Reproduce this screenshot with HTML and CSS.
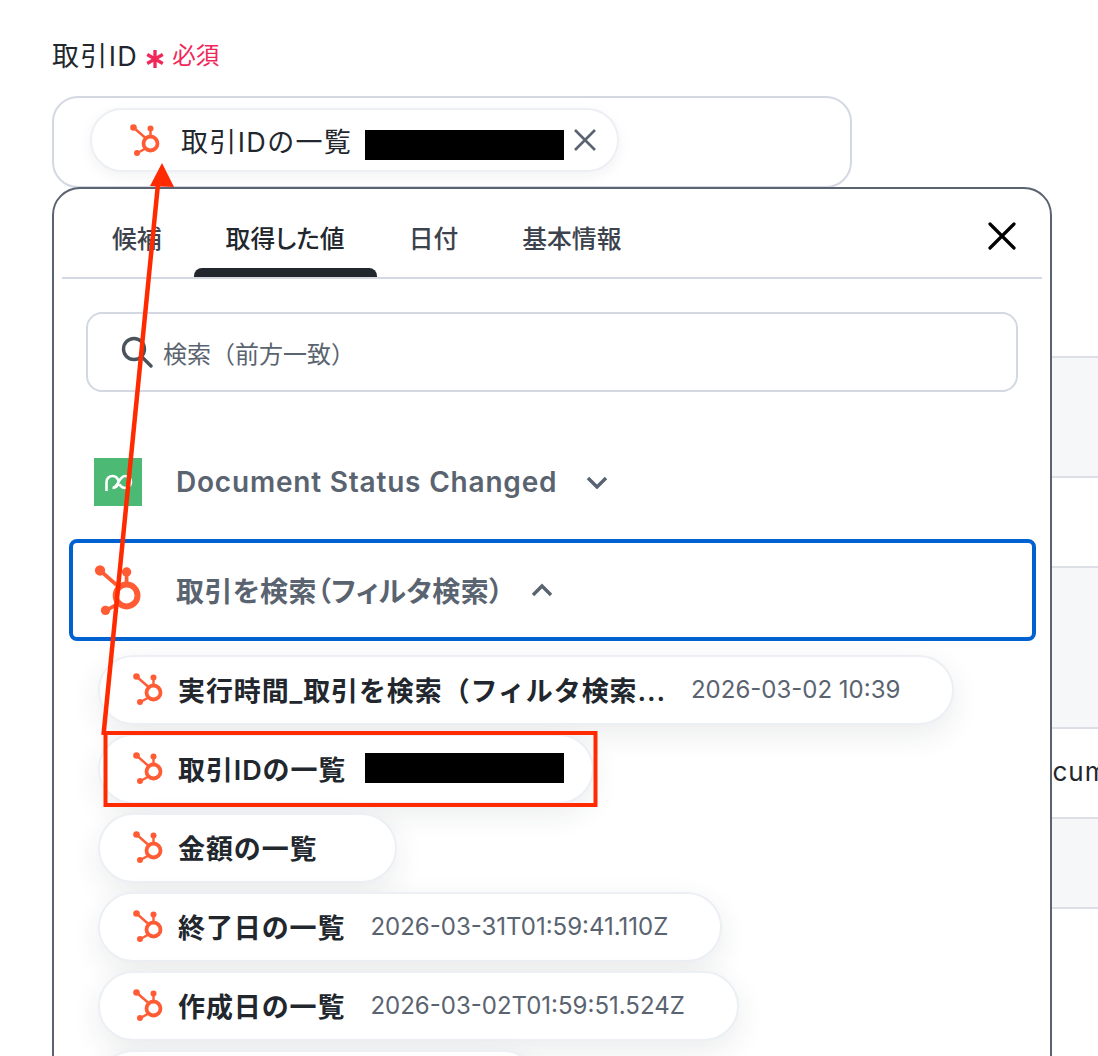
FILE: index.html
```html
<!DOCTYPE html>
<html lang="ja">
<head>
<meta charset="utf-8">
<title>取引ID</title>
<link rel="stylesheet" href="styles.css">
</head>
<body>
<svg class="defs" width="0" height="0" aria-hidden="true">
  <symbol id="hs" viewBox="0 0 30 32">
    <circle cx="20.5" cy="19.5" r="7" fill="none" stroke="currentColor" stroke-width="3.8"/>
    <path d="M20.5 5v8M3.5 3.5 15.5 14M15.5 24.5 7.5 29" fill="none" stroke="currentColor" stroke-width="2.4"/>
    <circle cx="20.5" cy="4.5" r="3" fill="currentColor"/>
    <circle cx="3.5" cy="3.5" r="3.3" fill="currentColor"/>
    <circle cx="7" cy="29" r="3" fill="currentColor"/>
  </symbol>
</svg>
<main class="page">
  <div class="label">
    <span>取引ID</span>
    <svg class="star" viewBox="0 0 18 18" aria-hidden="true"><path d="M9 1v16M2 5l14 8M16 5 2 13" stroke="currentColor" stroke-width="3" fill="none"/></svg>
    <span class="required">必須</span>
  </div>
  <div class="field">
    <div class="tag">
      <svg class="hs-icon"><use href="#hs"/></svg>
      <span class="tag-text">取引IDの一覧</span>
      <span class="redact"></span>
      <svg class="tag-x" viewBox="0 0 24 24" aria-hidden="true"><path d="M2 2l20 20M22 2 2 22" stroke="currentColor" stroke-width="2.6" fill="none"/></svg>
    </div>
  </div>
  <div class="table">
    <div class="row row-a"></div>
    <div class="row row-b"></div>
    <div class="row row-c"></div>
    <div class="row row-d">Document</div>
    <div class="row row-e"></div>
    <div class="row row-f"></div>
  </div>

  <section class="popup">
    <div class="tabs">
      <span class="tab">候補</span>
      <span class="tab tab-active">取得した値</span>
      <span class="tab">日付</span>
      <span class="tab">基本情報</span>
      <svg class="close" viewBox="0 0 28 28" aria-hidden="true"><path d="M2 2l24 24M26 2 2 26" stroke="currentColor" stroke-width="3.2" stroke-linecap="round" fill="none"/></svg>
    </div>
    <div class="search">
      <svg class="search-icon" viewBox="0 0 32 32" aria-hidden="true"><circle cx="13" cy="13" r="10.5" fill="none" stroke="currentColor" stroke-width="3.4"/><path d="M21 21l9 9" stroke="currentColor" stroke-width="3.4" stroke-linecap="round"/></svg>
      <span class="placeholder">検索（前方一致）</span>
    </div>
    <div class="group">
      <svg class="pd-icon" viewBox="0 0 48 48" aria-hidden="true">
        <rect width="48" height="48" fill="#4cba75"/>
        <path d="M12.500 33V24a6 6 0 1 1 6 6c5.500 0 6.500-12 12.500-12a6 6 0 0 1 0 12c-3 0-4.500-2-5.500-3.500" fill="none" stroke="#fff" stroke-width="2.600"/>
      </svg>
      <span class="group-title">Document Status Changed</span>
      <svg class="chev" viewBox="0 0 24 14" aria-hidden="true"><path d="M3 3l9 9 9-9" fill="none" stroke="currentColor" stroke-width="3.400"/></svg>
    </div>
    <div class="group group-open">
      <svg class="hs-big"><use href="#hs"/></svg>
      <span class="group-title group-title-ja">取引を検索（フィルタ検索）</span>
      <svg class="chev" viewBox="0 0 24 14" aria-hidden="true"><path d="M3 12l9-9 9 9" fill="none" stroke="currentColor" stroke-width="3.400"/></svg>
    </div>
    <ul class="chips">
      <li class="chip"><svg class="hs-icon"><use href="#hs"/></svg><span class="chip-name">実行時間_取引を検索（フィルタ検索...</span><span class="chip-value">2026-03-02 10:39</span></li>
      <li class="chip chip-redacted"><svg class="hs-icon"><use href="#hs"/></svg><span class="chip-name">取引IDの一覧</span><span class="redact redact-chip"></span></li>
      <li class="chip"><svg class="hs-icon"><use href="#hs"/></svg><span class="chip-name">金額の一覧</span><span class="chip-value"></span></li>
      <li class="chip"><svg class="hs-icon"><use href="#hs"/></svg><span class="chip-name">終了日の一覧</span><span class="chip-value">2026-03-31T01:59:41.110Z</span></li>
      <li class="chip"><svg class="hs-icon"><use href="#hs"/></svg><span class="chip-name">作成日の一覧</span><span class="chip-value">2026-03-02T01:59:51.524Z</span></li>
      <li class="chip chip-last"></li>
    </ul>
  </section>

  <svg class="annot" viewBox="0 0 1098 1056" aria-hidden="true">
    <rect x="105.500" y="733" width="490" height="72" fill="none" stroke="#ff2a00" stroke-width="4"/>
    <path d="M103.500 735 158 184" fill="none" stroke="#ff2a00" stroke-width="4.500"/>
    <path d="M162 163 174 187 150 186Z" fill="#ff2a00"/>
  </svg>
</main>
</body>
</html>
```
FILE: styles.css
```css
* { box-sizing: border-box; }
html, body { margin: 0; height: 100%; overflow: hidden; background: #fff; }
body {
  font-family: Inter, "Noto Sans CJK JP", sans-serif;
  color: #22272e;
}
.defs { position: absolute; }
.page {
  position: relative;
  height: 1056px;
  overflow: hidden;
  padding: 36px 0 0 52px;
}
.label {
  display: flex;
  align-items: center;
  height: 36px;
  font-size: 27px;
  letter-spacing: 0.05em;
}
.star { width: 20px; height: 20px; margin: 9px 7px 0 7px; color: #f0285a; }
.required { font-size: 23.500px; color: #f0285a; letter-spacing: 0; }
.field {
  width: 800px;
  height: 92px;
  margin-top: 24px;
  padding: 10px 0 0 36px;
  border: 2px solid #d3d8e2;
  border-radius: 26px;
}
.tag {
  display: flex;
  align-items: center;
  width: 529px;
  height: 64px;
  padding-left: 38px;
  background: #fff;
  border: 2px solid #eceff4;
  border-radius: 32px;
  box-shadow: 0 4px 14px rgba(30, 40, 60, 0.06);
}
.hs-icon { width: 30px; height: 32px; flex: none; color: #ff5c35; }
.tag-text { margin-left: 21px; font-size: 27px; letter-spacing: 0.05em; white-space: nowrap; }
.redact { display: block; width: 199px; height: 30px; background: #000; flex: none; }
.tag .redact { margin-left: 13px; margin-top: 10px; }
.tag-x { width: 24px; height: 24px; margin-left: 9px; color: #5a6370; flex: none; }

.table { margin-top: 168px; width: 1046px; font-size: 26px; }
.row { border-top: 2px solid #dcdfe5; padding-left: 964px; line-height: 86px; letter-spacing: 0.04em; white-space: nowrap; overflow: hidden; }
.row-a { height: 120px; background: #f6f7f9; }
.row-b { height: 90px; }
.row-c { height: 161px; background: #f6f7f9; }
.row-d { height: 90px; }
.row-e { height: 90px; background: #f6f7f9; }
.row-f { height: 90px; }

.popup {
  position: absolute;
  left: 52px;
  top: 187px;
  width: 1000px;
  height: 940px;
  background: #fff;
  border: 2px solid #5a6370;
  border-radius: 28px;
}
.tabs {
  display: flex;
  align-items: center;
  height: 90px;
  margin: 0 8px;
  padding-left: 18px;
  border-bottom: 2px solid #d3d8e2;
}
.tab {
  position: relative;
  align-self: stretch;
  display: flex;
  align-items: center;
  padding: 8px 32px 0;
  font-size: 24.800px;
  font-weight: 500;
  font-feature-settings: "palt";
  color: #3c434d;
}
.tab-active { color: #22272e; }
.tab-active::after {
  content: "";
  position: absolute;
  left: 0;
  right: 0;
  bottom: 0;
  height: 9px;
  background: #22272e;
  border-radius: 8px 8px 0 0;
}
.close { width: 28px; height: 28px; margin: 6px 26px 0 auto; color: #000; }
.search {
  display: flex;
  align-items: center;
  width: 932px;
  height: 80px;
  margin: 33px 0 0 32px;
  padding-left: 33px;
  border: 2px solid #d3d8e2;
  border-radius: 16px;
}
.search-icon { width: 32px; height: 32px; color: #4a525c; flex: none; }
.placeholder { margin-left: 10px; font-size: 24px; color: #5a6370; }
.group {
  display: flex;
  align-items: center;
  width: 967px;
  height: 100px;
  margin: 7px 0 0 15px;
  padding-left: 22px;
  border: 3px solid transparent;
  border-radius: 8px;
  color: #5a6370;
}
.search + .group { margin-top: 40px; }
.group-open { height: 102px; padding-left: 21px; border: 4px solid #0062d1; }
.pd-icon { width: 48px; height: 48px; flex: none; }
.hs-big { width: 52px; height: 50px; flex: none; color: #ff5c35; margin: 0 -2px; }
.group-title { margin-left: 34px; font-size: 28px; font-weight: 600; letter-spacing: 0.8px; white-space: nowrap; }
.group-title-ja { letter-spacing: 0.4px; font-feature-settings: "palt"; }
.chev { width: 24px; height: 14px; margin-left: 28px; flex: none; }
.group-open .chev { margin-left: 26px; }

.chips {
  display: flex;
  flex-direction: column;
  align-items: flex-start;
  gap: 9px;
  list-style: none;
  margin: 14px 0 0 44px;
  padding: 0;
}
.chip {
  display: flex;
  align-items: center;
  height: 70px;
  padding: 0 52px 2px 33px;
  background: #fff;
  border: 2px solid #eceff4;
  border-radius: 35px;
  box-shadow: 0 10px 30px rgba(30, 40, 60, 0.09);
  flex: none;
}
.chip-redacted { padding-right: 28px; }
.chip-last { width: 440px; }
.chip-name {
  margin-left: 15px;
  font-size: 27px;
  font-weight: 600;
  letter-spacing: 0.9px;
  white-space: nowrap;
}
.chip-value { margin-left: 25px; font-size: 24px; color: #5a6370; white-space: nowrap; }
.redact-chip { margin-left: 19px; }
.annot { position: absolute; left: 0; top: 0; width: 1098px; height: 1056px; pointer-events: none; }
```
